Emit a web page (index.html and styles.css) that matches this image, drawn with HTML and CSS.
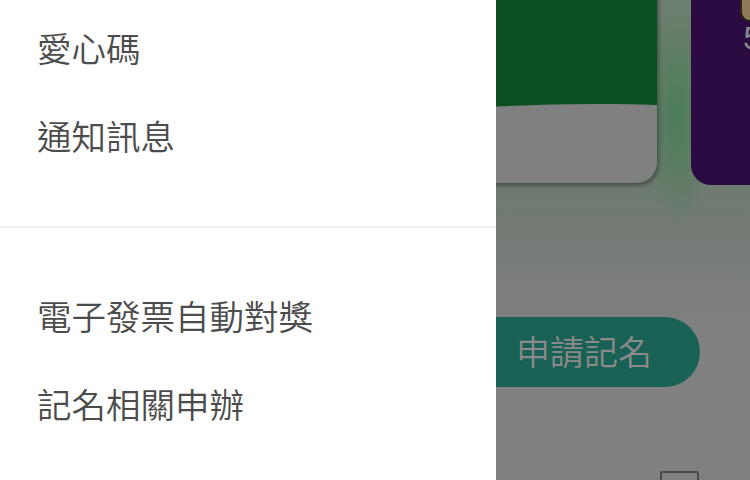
FILE: index.html
```html
<!DOCTYPE html>
<html lang="zh-Hant">

<head>
    <meta charset="UTF-8">
    <meta name="viewport" content="width=device-width, initial-scale=1.0">
    <title>Menu</title>
    <link rel="stylesheet" href="styles.css">
</head>

<body>
    <aside class="drawer">
        <ul class="menu-group">
            <li class="menu-item">愛心碼</li>
            <li class="menu-item">通知訊息</li>
        </ul>
        <div class="menu-divider"></div>
        <ul class="menu-group">
            <li class="menu-item">電子發票自動對獎</li>
            <li class="menu-item">記名相關申辦</li>
        </ul>
    </aside>

    <main class="screen">
        <div class="card-row">
            <div class="card card-green">
                <svg class="card-wave" viewBox="0 0 260 80" preserveAspectRatio="none">
                    <path d="M0 10 C80 4 160 -1 260 2 L260 80 L0 80 Z" fill="#808080" />
                </svg>
            </div>
            <div class="card card-purple">
                <div class="badge"></div>
                <div class="card-num">5</div>
            </div>
        </div>
        <div class="apply-btn">申請記名</div>
        <div class="bottom-tab"></div>
    </main>
</body>

</html>
```

FILE: styles.css
```css
body {
    margin: 0;
    display: flex;
    width: 750px;
    height: 480px;
    overflow: hidden;
    font-family: "Noto Sans CJK TC", "Noto Sans", sans-serif;
}

.drawer {
    width: 496px;
    flex-shrink: 0;
    background: #fff;
    position: relative;
    z-index: 2;
}

.menu-group {
    list-style: none;
    margin: 0;
    padding: 3px 0 47px;
}

.menu-group + .menu-divider + .menu-group {
    padding-top: 43px;
}

.menu-item {
    height: 88px;
    line-height: 88px;
    padding-left: 37px;
    font-size: 34.5px;
    font-weight: 350;
    color: #4c4c4c;
}

.menu-divider {
    height: 2px;
    background: #efefef;
}

.screen {
    flex: 1;
    overflow: hidden;
    display: flex;
    flex-direction: column;
    background:
        radial-gradient(ellipse 38px 110px at 182px 115px, rgba(70, 125, 85, 0.85), rgba(70, 125, 85, 0) 100%),
        linear-gradient(180deg, #6d7f70 0%, #6a7c6c 30%, #737a74 48%, #7d7f7d 62%, #808080 75%, #808080 100%);
}

.screen > * {
    flex-shrink: 0;
}

.card-row {
    display: flex;
    gap: 34px;
    margin-top: -20px;
    margin-left: -100px;
}

.card {
    flex-shrink: 0;
    border-radius: 20px;
    position: relative;
    overflow: hidden;
}

.card-green {
    width: 261px;
    height: 203px;
    background: #0a4f1f;
    box-shadow: 1px 2px 5px rgba(0, 0, 0, 0.45);
}

.card-wave {
    position: absolute;
    left: 0;
    bottom: 0;
    width: 100%;
    height: 80px;
    display: block;
}

.card-purple {
    width: 120px;
    height: 205px;
    background: #2b0b42;
    padding-left: 49px;
    box-sizing: border-box;
}

.badge {
    margin-top: 10px;
    width: 30px;
    height: 28px;
    background: #8c7a58;
    border: 2px solid #2a2418;
    border-radius: 10px;
}

.card-num {
    margin-top: 2px;
    margin-left: 2px;
    font-family: "Roboto", sans-serif;
    font-size: 32px;
    line-height: 28px;
    color: #8a8a8a;
}

.apply-btn {
    margin-top: 132px;
    margin-left: -40px;
    width: 244px;
    height: 70px;
    padding-left: 60px;
    box-sizing: border-box;
    background: #1a6155;
    border-radius: 0 35px 35px 0;
    font-size: 34px;
    font-weight: 350;
    line-height: 68px;
    color: #8a8a8a;
}

.bottom-tab {
    margin-top: 84px;
    margin-left: 164px;
    width: 39px;
    height: 20px;
    box-sizing: border-box;
    border: 2px solid #4a4a4a;
    border-radius: 2px;
}
```
